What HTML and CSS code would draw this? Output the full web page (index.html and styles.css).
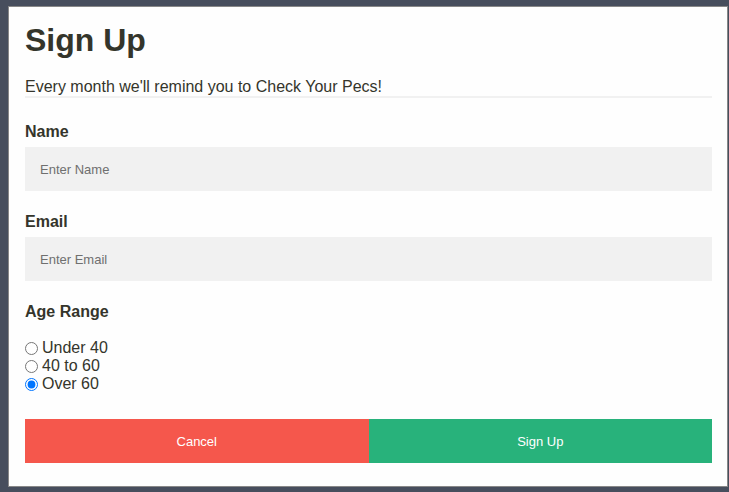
FILE: index.html
```html
<!DOCTYPE html>
<html lang="en">
<head>
<meta charset="utf-8">
<title>Sign Up</title>
<link rel="stylesheet" href="styles.css">
</head>
<body>
<div class="modal">
  <form class="container">
    <h1 class="title">Sign Up</h1>
    <p class="intro">Every month we'll remind you to Check Your Pecs!</p>
    <hr class="divider">
    <label class="field-label" for="name">Name</label>
    <input class="text-input" id="name" type="text" placeholder="Enter Name">
    <label class="field-label" for="email">Email</label>
    <input class="text-input" id="email" type="text" placeholder="Enter Email">
    <div class="field-label">Age Range</div>
    <div class="radios">
      <label class="radio"><input type="radio" name="age"> Under 40</label>
      <label class="radio"><input type="radio" name="age"> 40 to 60</label>
      <label class="radio"><input type="radio" name="age" checked> Over 60</label>
    </div>
    <div class="buttons">
      <button type="button" class="btn btn-cancel">Cancel</button>
      <button type="button" class="btn btn-signup">Sign Up</button>
    </div>
  </form>
</div>
</body>
</html>
```
FILE: styles.css
```css
html, body {
  margin: 0;
  padding: 0;
}
body {
  background: #474e5d;
  font-family: "Liberation Sans", Arial, Helvetica, sans-serif;
  color: #34352b;
  height: 492px;
  overflow: hidden;
}
.modal {
  margin: 6px 0 0 8px;
  width: 718px;
  background: #fefefe;
  border: 1px solid #888;
}
.container {
  display: flex;
  flex-direction: column;
  padding: 15px 15px 23px 16px;
}
.title {
  margin: 0;
  font-size: 32px;
  line-height: 36px;
  font-weight: bold;
}
.intro {
  margin: 20px 0 0;
  font-size: 16px;
  line-height: 18px;
}
.divider {
  margin: 0;
  border: 0;
  height: 2px;
  background: #f1f1f1;
}
.field-label {
  display: block;
  margin-top: 22px;
  font-size: 16px;
  line-height: 18px;
  font-weight: bold;
}
.divider + .field-label {
  margin-top: 25px;
}
.text-input {
  margin: 6px 0 0;
  box-sizing: border-box;
  height: 44px;
  width: 100%;
  border: 0;
  background: #f1f1f1;
  padding: 0 15px;
  font-family: "Liberation Sans", Arial, sans-serif;
  font-size: 13px;
  color: #333;
  outline: none;
}
.text-input::placeholder {
  color: #6f6f6f;
}
.radios {
  display: flex;
  flex-direction: column;
  margin-top: 18px;
}
.radio {
  display: flex;
  align-items: center;
  font-size: 16px;
  line-height: 18px;
}
.radio input {
  margin: 0 4px 0 0;
  width: 13px;
  height: 13px;
}
.buttons {
  display: flex;
  margin-top: 26px;
}
.btn {
  flex: 1;
  height: 44px;
  border: 0;
  margin: 0;
  color: #fff;
  font-family: "Liberation Sans", Arial, sans-serif;
  font-size: 13px;
  cursor: pointer;
}
.btn-cancel {
  background: #f5574c;
}
.btn-signup {
  background: #28b27b;
}
```
